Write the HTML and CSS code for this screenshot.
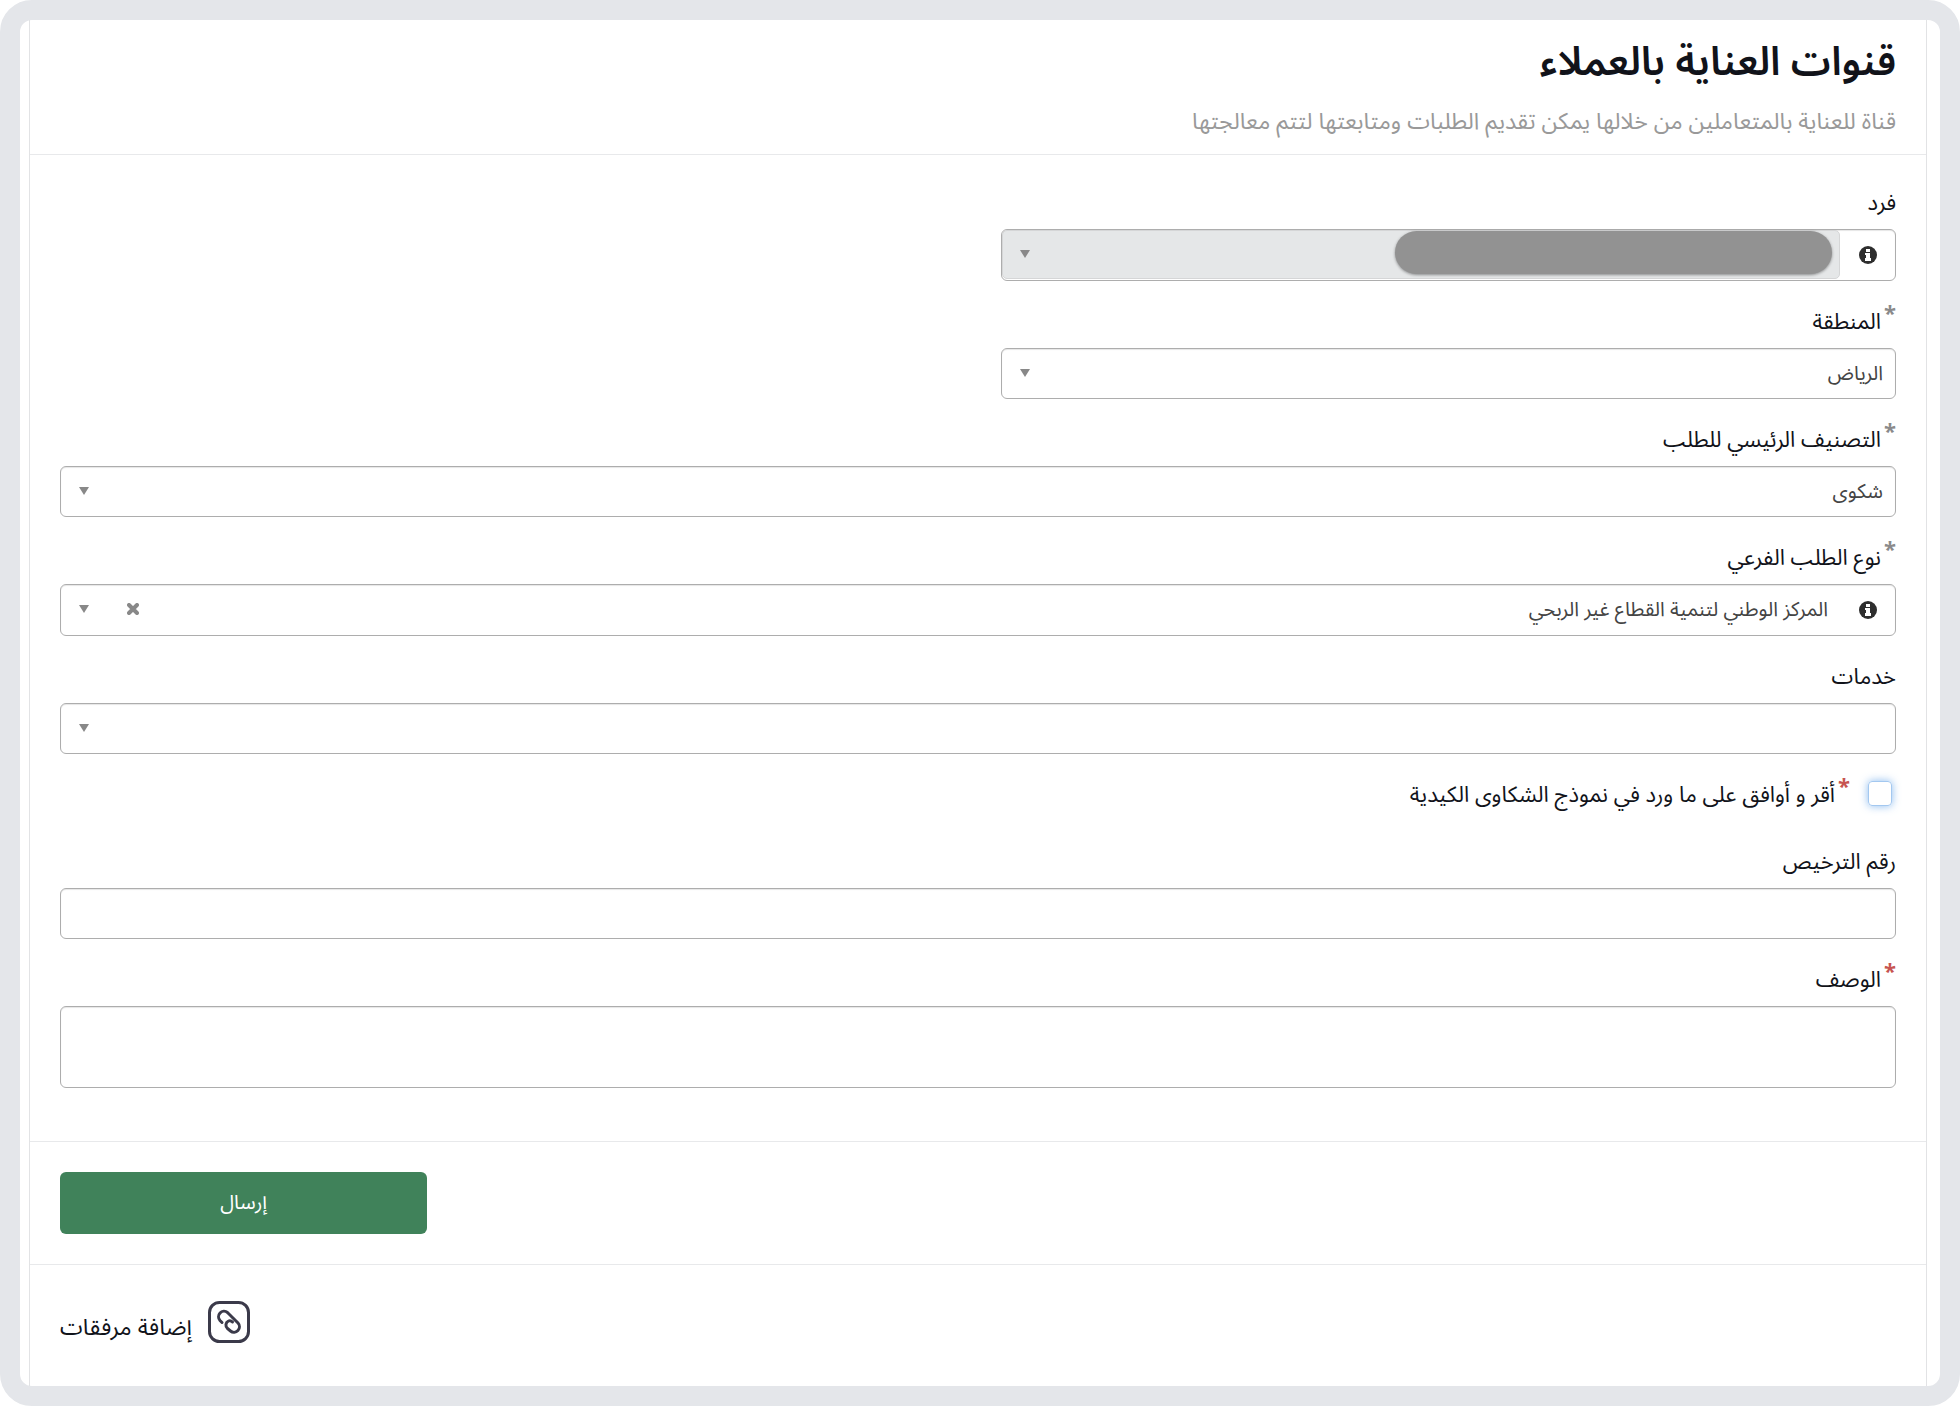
FILE: index.html
```html
<!DOCTYPE html>
<html lang="ar" dir="rtl">
<head>
    <meta charset="UTF-8">
    <meta name="viewport" content="width=device-width, initial-scale=1.0">
    <title>قنوات العناية بالعملاء</title>
    <link rel="stylesheet" href="styles.css">
</head>
<body>
    <div class="frame">
        <main class="panel">
            <header class="panel-header">
                <h1>قنوات العناية بالعملاء</h1>
                <p>قناة للعناية بالمتعاملين من خلالها يمكن تقديم الطلبات ومتابعتها لتتم معالجتها</p>
            </header>

            <form id="requestForm" class="panel-body">
                <div class="field half">
                    <label for="person">فرد</label>
                    <div class="control group disabled">
                        <span class="info">
                            <svg viewBox="0 0 18 18" width="18" height="18" aria-hidden="true">
                                <circle cx="9" cy="9" r="9" fill="#2e2e2e"/>
                                <path d="M7 3h4v3H7zM6 7h5v5h1v3H6v-3h1V9H6z" fill="#fff"/>
                            </svg>
                        </span>
                        <div class="select-wrap">
                            <select id="person" disabled><option></option></select>
                            <span class="mask"></span>
                        </div>
                    </div>
                </div>

                <div class="field half">
                    <label for="region"><span class="star">*</span>المنطقة</label>
                    <div class="control select-wrap">
                        <select id="region"><option>الرياض</option></select>
                    </div>
                </div>

                <div class="field">
                    <label for="category"><span class="star">*</span>التصنيف الرئيسي للطلب</label>
                    <div class="control select-wrap">
                        <select id="category"><option>شكوى</option></select>
                    </div>
                </div>

                <div class="field">
                    <label for="subtype"><span class="star">*</span>نوع الطلب الفرعي</label>
                    <div class="control group">
                        <span class="info">
                            <svg viewBox="0 0 18 18" width="18" height="18" aria-hidden="true">
                                <circle cx="9" cy="9" r="9" fill="#2e2e2e"/>
                                <path d="M7 3h4v3H7zM6 7h5v5h1v3H6v-3h1V9H6z" fill="#fff"/>
                            </svg>
                        </span>
                        <div class="select-wrap">
                            <select id="subtype"><option>المركز الوطني لتنمية القطاع غير الربحي</option></select>
                            <button type="button" class="clear" aria-label="مسح">
                                <svg viewBox="0 0 12 12" width="12" height="12">
                                    <path d="M2 2l8 8M10 2l-8 8" stroke="#888" stroke-width="4" stroke-linecap="round"/>
                                </svg>
                            </button>
                        </div>
                    </div>
                </div>

                <div class="field">
                    <label for="services">خدمات</label>
                    <div class="control select-wrap">
                        <select id="services"><option></option></select>
                    </div>
                </div>

                <div class="field check">
                    <input type="checkbox" id="agree">
                    <label for="agree"><span class="star required">*</span>أقر و أوافق على ما ورد في نموذج الشكاوى الكيدية</label>
                </div>

                <div class="field">
                    <label for="license">رقم الترخيص</label>
                    <input type="text" id="license" class="control">
                </div>

                <div class="field">
                    <label for="description"><span class="star required">*</span>الوصف</label>
                    <textarea id="description" class="control"></textarea>
                </div>
            </form>

            <div class="actions">
                <button type="submit" form="requestForm" class="submit">إرسال</button>
            </div>

            <div class="attachments">
                <button type="button" class="attach">
                    <svg viewBox="0 0 42 42" width="42" height="42" fill="none" stroke="#3b3a4a" stroke-width="3" stroke-linecap="round" aria-hidden="true">
                        <rect x="1.5" y="1.5" width="39" height="39" rx="10"/>
                        <path d="M14 21.5l-2-2a5.5 5.5 0 0 1 7.500-8l10.500 10.500a5.500 5.500 0 0 1-7.500 8l-3-2.500a4.500 4.500 0 0 1 1-7.500q2-1 4 1"/>
                    </svg>
                    <span>إضافة مرفقات</span>
                </button>
            </div>
        </main>
    </div>
</body>
</html>
```
FILE: styles.css
```css
* {
    box-sizing: border-box;
}

body {
    margin: 0;
    background-color: #fff;
    color: #11131a;
    font-family: "Noto Sans Arabic", "Noto Sans", "DejaVu Sans", sans-serif;
    font-size: 22px;
}

.frame {
    min-height: 100vh;
    padding: 0 6px 0 9px;
    border: 20px solid #e4e6ea;
    border-radius: 32px;
    display: flex;
    direction: ltr;
}

.panel {
    flex: 1;
    direction: rtl;
    border: 1px solid #e2e3e5;
    border-width: 0 1px;
    margin-right: 7px;
}

.panel-header {
    height: 135px;
    padding: 11px 30px 0;
    border-bottom: 1px solid #e8e9eb;
}

h1 {
    margin: 0;
    font-size: 40px;
    line-height: 64px;
    font-weight: 600;
}

.panel-header p {
    margin: 10px 0 0;
    color: #999;
    font-size: 23px;
    line-height: 34px;
}

.panel-body {
    padding: 31px 30px 53px;
}

.field {
    margin-bottom: 24px;
}

.field:last-child {
    margin-bottom: 0;
}

.half {
    width: calc(50% - 23px);
}

.field label {
    display: block;
    width: fit-content;
    line-height: 34px;
    margin-bottom: 9px;
}

.star {
    color: #8a8a8a;
    font-weight: 700;
    line-height: 0;
    vertical-align: super;
    margin-left: 3px;
}

.star.required {
    color: #c75450;
}

.control {
    display: block;
    width: 100%;
    height: 51px;
    border: 1px solid #adadad;
    border-radius: 6px;
    background-color: #fff;
    box-shadow: inset 0 1px 1px rgba(0,0,0,0.1);
}

input.control,
textarea.control {
    padding: 8px 12px;
    font: inherit;
    resize: none;
    outline: none;
}

textarea.control {
    height: 82px;
}

.group {
    display: flex;
    height: 52px;
}

.info {
    width: 55px;
    display: flex;
    align-items: center;
    justify-content: center;
}

.select-wrap {
    position: relative;
}

.group .select-wrap {
    flex: 1;
}

.select-wrap::after {
    content: "";
    position: absolute;
    left: 18px;
    top: 20px;
    width: 10px;
    height: 8px;
    background-color: #888;
    clip-path: polygon(0 0, 100% 0, 50% 100%);
    pointer-events: none;
}

select {
    appearance: none;
    display: block;
    width: 100%;
    height: 100%;
    padding: 0 12px;
    border: none;
    border-radius: 5px;
    background: none;
    color: #444;
    font: inherit;
    font-size: 20px;
    outline: none;
}

.disabled .select-wrap {
    margin-bottom: 1px;
}

.disabled select {
    background-color: #e5e7e8;
    border: 1px solid #d5d6d7;
    opacity: 1;
}

.mask {
    position: absolute;
    top: 1px;
    right: 8px;
    width: 437px;
    height: 43px;
    border-radius: 22px;
    background-color: #929292;
    box-shadow: 0 1px 3px rgba(0,0,0,0.4);
}

.clear {
    position: absolute;
    left: 66px;
    top: 18px;
    padding: 0;
    border: none;
    background: none;
    line-height: 0;
    cursor: pointer;
}

.check {
    display: flex;
    align-items: center;
    gap: 18px;
    margin-bottom: 33px;
}

.check label {
    margin: 0;
}

.check input {
    appearance: none;
    width: 24px;
    height: 25px;
    margin: 0 4px 4px 0;
    border: 1px solid #a3c8f0;
    border-radius: 4px;
    box-shadow: 0 0 8px rgba(110,170,235,0.8);
}

.actions {
    padding: 30px;
    border: 1px solid #e8e9eb;
    border-width: 1px 0;
    direction: ltr;
}

.submit {
    display: block;
    width: 20%;
    height: 62px;
    border: none;
    border-radius: 6px;
    background-color: #40825a;
    color: #fff;
    font: inherit;
    font-size: 20px;
    cursor: pointer;
}

.attachments {
    padding: 36px 30px;
    direction: ltr;
}

.attach {
    display: flex;
    align-items: flex-start;
    gap: 16px;
    padding: 0;
    border: none;
    background: none;
    color: inherit;
    font: inherit;
    font-size: 23px;
    line-height: 34px;
    direction: rtl;
    cursor: pointer;
}

.attach span {
    padding-top: 10px;
}
```
